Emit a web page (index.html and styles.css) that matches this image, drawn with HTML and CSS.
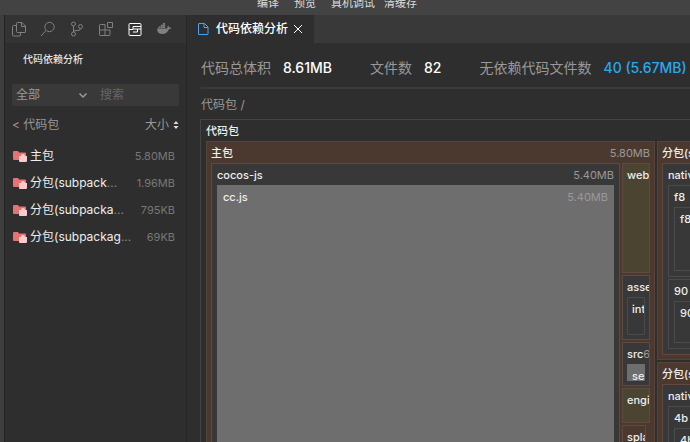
FILE: index.html
```html
<!DOCTYPE html>
<html lang="zh-CN">
<head>
  <meta charset="UTF-8" />
  <meta name="viewport" content="width=device-width, initial-scale=1" />
  <title>代码依赖分析</title>
  <link rel="stylesheet" href="styles.css">
</head>
<body>

  <header class="toolbar">
    <button class="tool">编译</button>
    <button class="tool">预览</button>
    <button class="tool">真机调试</button>
    <button class="tool">清缓存</button>
  </header>

  <div class="workspace">
    <aside class="sidebar">
      <nav class="activity">
        <button class="activity-btn" aria-label="文件">
          <svg viewBox="0 0 16 16"><path d="M6.500 1.500h4.500l3.500 3.500v6q0 .5-.5.500H6.500q-1 0-1-1v-8q0-1 1-1zM10.500 1.500v4h4M5.500 4.500h-3q-1 0-1 1v8.500q0 1 1 1h6q1 0 1-1v-2.500"/></svg>
        </button>
        <button class="activity-btn" aria-label="搜索">
          <svg viewBox="0 0 16 16"><circle cx="9.500" cy="6" r="4.700"/><path d="M6.300 9.300L1 15"/></svg>
        </button>
        <button class="activity-btn" aria-label="版本">
          <svg viewBox="0 0 16 16"><circle cx="4.500" cy="3" r="2"/><circle cx="4.500" cy="13" r="2"/><circle cx="11.500" cy="5.500" r="2"/><path d="M4.500 5v6M11.500 7.500q0 2-2.500 2H7q-2.500 0-2.500 1.500"/></svg>
        </button>
        <button class="activity-btn" aria-label="扩展">
          <svg viewBox="0 0 16 16"><path d="M7 3.500v11M1.500 9h10.500v4.700q0 .8-.8.800H2.300q-.8 0-.8-.8V4.300q0-.8.800-.8H7M9.500 1.500h5v5h-5z"/></svg>
        </button>
        <button class="activity-btn active" aria-label="代码依赖分析">
          <svg viewBox="0 0 16 16"><rect x="2" y="2.500" width="12" height="12" rx="1"/><path d="M14 5.500H6v2.500h4.500v3H6M2 8.500h4M10.500 8H14"/></svg>
        </button>
        <button class="activity-btn" aria-label="容器">
          <svg class="solid" viewBox="0 0 16 16"><path d="M1 7.500h10.500q-.5-2 .6-3 1 .8 1.100 2 1.500-.3 2.300.3-.8 1.500-2.700 1.500Q11.200 13 6.300 13 1.200 13 1 7.500zM2.500 5.500h2v1.600h-2zM4.800 5.500h2v1.600h-2zM7.100 5.500h2v1.600h-2zM4.800 3.700h4.300v1.500H4.800zM7.100 2h2v1.500h-2z"/></svg>
        </button>
      </nav>

      <h2 class="side-title">代码依赖分析</h2>

      <div class="filter">
        <select aria-label="类型">
          <option>全部</option>
        </select>
        <svg class="caret" viewBox="0 0 10 10"><path d="M1.500 3.500L5 7l3.500-3.500"/></svg>
        <input type="text" placeholder="搜索" aria-label="搜索">
      </div>

      <div class="list-head">
        <a href="#">&lt; 代码包</a>
        <button class="sort">大小
          <svg viewBox="0 0 6 10"><path d="M.5 4L3 1l2.500 3zM.5 6L3 9l2.500-3z"/></svg>
        </button>
      </div>

      <ul class="packages">
        <li>
          <svg class="folder" viewBox="0 0 14 12"><path class="back" d="M1 1h4l1 1.500h6q1 0 1 1V10H1q-1 0-1-1V2q0-1 1-1z"/><path class="bag" d="M6 6h2q0-2 2-2t2 2h2v5q0 1-1 1H7q-1 0-1-1z"/></svg>
          <span class="name">主包</span><span class="size">5.80MB</span>
        </li>
        <li>
          <svg class="folder" viewBox="0 0 14 12"><path class="back" d="M1 1h4l1 1.500h6q1 0 1 1V10H1q-1 0-1-1V2q0-1 1-1z"/><path class="bag" d="M6 6h2q0-2 2-2t2 2h2v5q0 1-1 1H7q-1 0-1-1z"/></svg>
          <span class="name">分包(subpack<i>...</i></span><span class="size">1.96MB</span>
        </li>
        <li>
          <svg class="folder" viewBox="0 0 14 12"><path class="back" d="M1 1h4l1 1.500h6q1 0 1 1V10H1q-1 0-1-1V2q0-1 1-1z"/><path class="bag" d="M6 6h2q0-2 2-2t2 2h2v5q0 1-1 1H7q-1 0-1-1z"/></svg>
          <span class="name">分包(subpacka<i>...</i></span><span class="size">795KB</span>
        </li>
        <li>
          <svg class="folder" viewBox="0 0 14 12"><path class="back" d="M1 1h4l1 1.500h6q1 0 1 1V10H1q-1 0-1-1V2q0-1 1-1z"/><path class="bag" d="M6 6h2q0-2 2-2t2 2h2v5q0 1-1 1H7q-1 0-1-1z"/></svg>
          <span class="name">分包(subpackag<i>...</i></span><span class="size">69KB</span>
        </li>
      </ul>
    </aside>

    <main class="main">
      <div class="tabs">
        <div class="tab">
          <svg class="file-icon" viewBox="0 0 12 14"><path d="M2 1.500h5.500l3.500 3.500v7q0 .5-.5.500H2q-.5 0-.5-.5V2q0-.5.500-.5zM7 1.500v4h4"/></svg>
          <span>代码依赖分析</span>
          <button class="close" aria-label="关闭">
            <svg viewBox="0 0 10 10"><path d="M1 1l8 8M9 1L1 9"/></svg>
          </button>
        </div>
      </div>

      <div class="content">
        <dl class="stats">
          <div><dt>代码总体积</dt><dd>8.61MB</dd></div>
          <div><dt>文件数</dt><dd>82</dd></div>
          <div><dt>无依赖代码文件数</dt><dd><a href="#">40 (5.67MB)</a></dd></div>
        </dl>

        <div class="crumb">代码包 /</div>

        <div class="node root">
          <div class="label">代码包</div>
          <div class="row">

            <div class="node package main-package">
              <div class="label">主包<span>5.80MB</span></div>
              <div class="row">
                <div class="node grow">
                  <div class="label">cocos-js<span>5.40MB</span></div>
                  <div class="node leaf grow">
                    <div class="label">cc.js<span>5.40MB</span></div>
                  </div>
                </div>
                <div class="column small-dirs">
                  <div class="node olive web"><div class="label">web-mobile</div></div>
                  <div class="node assets">
                    <div class="label">assets</div>
                    <div class="node grow"><div class="label">internal</div></div>
                  </div>
                  <div class="node src">
                    <div class="label">src<span>69KB</span></div>
                    <div class="node leaf grow"><div class="label">settings.js</div></div>
                  </div>
                  <div class="node olive engine"><div class="label">engine</div></div>
                  <div class="node package splash grow"><div class="label">splash</div></div>
                </div>
              </div>
            </div>

            <div class="column sub-packages">
              <div class="node package first">
                <div class="label">分包(subpackages)<span>1.96MB</span></div>
                <div class="node grow">
                  <div class="label">native</div>
                  <div class="column grow">
                    <div class="node f8">
                      <div class="label">f8</div>
                      <div class="node grow"><div class="label">f8</div></div>
                    </div>
                    <div class="node grow">
                      <div class="label">90</div>
                      <div class="node grow"><div class="label">90</div></div>
                    </div>
                  </div>
                </div>
              </div>
              <div class="node package grow">
                <div class="label">分包(subpackages)<span>795KB</span></div>
                <div class="node grow">
                  <div class="label">native</div>
                  <div class="node grow">
                    <div class="label">4b</div>
                    <div class="node grow"><div class="label">4b</div></div>
                  </div>
                </div>
              </div>
            </div>

          </div>
        </div>
      </div>
    </main>
  </div>

</body>
</html>
```
FILE: styles.css
```css
* {
  box-sizing: border-box;
}
body {
  margin: 0;
  height: 100vh;
  display: flex;
  flex-direction: column;
  overflow: hidden;
  background: #2e2e2e;
  color: #eee;
  font-family: Inter, "Noto Sans CJK SC", sans-serif;
  font-size: 12px;
  line-height: 16px;
}
button, input, select {
  font: inherit;
  color: inherit;
  background: none;
  border: none;
  padding: 0;
  margin: 0;
}
a {
  color: inherit;
  text-decoration: none;
}
svg {
  display: block;
  fill: none;
  stroke: currentColor;
}

/* top toolbar */
.toolbar {
  flex: none;
  height: 15px;
  background: #434343;
  display: flex;
  align-items: flex-end;
  gap: 15px;
  padding-left: 257px;
  padding-bottom: 4px;
}
.tool {
  font-size: 11px;
  color: #ddd;
  white-space: nowrap;
}
.tool:last-child {
  margin-left: -6px;
}
.workspace {
  flex: 1;
  min-height: 0;
  display: flex;
}

/* sidebar */
.sidebar {
  flex: none;
  width: 187px;
  border-left: 4px solid #3e3e3e;
  border-right: 1px solid #262626;
  box-shadow: inset 1px 0 #222;
  padding-left: 1px;
}
.activity {
  height: 28px;
  background: #333;
  display: flex;
  align-items: center;
  gap: 13px;
  padding-left: 6px;
}
.activity-btn {
  width: 16px;
  height: 16px;
  color: #808080;
}
.activity-btn.active {
  color: #fff;
}
.activity-btn svg {
  width: 16px;
  height: 16px;
}
.solid {
  fill: currentColor;
  stroke: none;
}
.side-title {
  margin: 8px 18px 17px;
  font-size: 10px;
  font-weight: 500;
  color: #e4e4e4;
}
.filter {
  height: 22px;
  margin: 0 7px;
  padding: 0 4px;
  background: #393939;
  border-radius: 2px;
  display: flex;
  align-items: center;
  color: #999;
}
.filter select {
  appearance: none;
  width: 62px;
}
.caret {
  width: 10px;
  height: 10px;
  stroke-width: 1.500;
}
.filter input {
  flex: 1;
  min-width: 0;
  margin-left: 12px;
}
.filter input::placeholder {
  color: #666;
}
.list-head {
  display: flex;
  justify-content: space-between;
  margin: 11px 7px 0;
  color: #999;
}
.sort {
  display: flex;
  align-items: center;
  gap: 4px;
}
.sort svg {
  width: 6px;
  height: 10px;
  fill: #ddd;
  stroke: none;
}
.packages {
  list-style: none;
  margin: 10px 11px 0 8px;
  padding: 0;
}
.packages li {
  display: flex;
  align-items: center;
  height: 26px;
  margin-bottom: 1px;
}
.folder {
  width: 14px;
  height: 12px;
  margin-right: 3px;
  stroke: none;
}
.folder .back {
  fill: #e57373;
}
.folder .bag {
  fill: #fbcaca;
}
.name {
  flex: 1;
  white-space: nowrap;
}
.name i {
  font-style: normal;
  color: #888;
}
.size {
  font-size: 11px;
  color: #777;
}

/* main */
.main {
  flex: 1;
  min-width: 0;
  display: flex;
  flex-direction: column;
}
.tabs {
  flex: none;
  height: 28px;
  background: #393939;
  display: flex;
}
.tab {
  display: flex;
  align-items: center;
  background: #2e2e2e;
  padding: 0 11px 0 10px;
  font-weight: 500;
  color: #fff;
}
.file-icon {
  width: 12px;
  height: 14px;
  margin-right: 7px;
  color: #42a5f5;
}
.close {
  margin-left: 5px;
}
.close svg {
  width: 10px;
  height: 10px;
}
.content {
  flex: 1;
  min-height: 0;
  overflow: hidden;
  padding-left: 13px;
}
.stats {
  display: flex;
  gap: 38px;
  height: 46px;
  margin: 0 0 0 1px;
  padding-top: 6px;
  border-bottom: 2px solid #3b3b3b;
  align-items: center;
  font-size: 14px;
  white-space: nowrap;
}
.stats div {
  display: flex;
  gap: 12px;
}
.stats dt {
  color: #999;
}
.stats dd {
  margin: 0;
  font-weight: 500;
  color: #fff;
}
.stats a {
  color: #29a9ee;
}
.crumb {
  margin: 8px 0 6px 1px;
  color: #999;
}

/* treemap */
.node {
  display: flex;
  flex-direction: column;
  min-width: 0;
  min-height: 0;
  overflow: hidden;
  border: 1px solid #4a4a4a;
  padding: 0 5px 5px;
  background: #383838;
}
.label {
  flex: none;
  display: flex;
  height: 21px;
  line-height: 22px;
  font-size: 11px;
  font-weight: 500;
  white-space: nowrap;
}
.label span {
  margin-left: auto;
  font-weight: 400;
  color: #999;
}
.row {
  flex: 1;
  min-height: 0;
  display: flex;
  gap: 2px;
}
.column {
  display: flex;
  flex-direction: column;
  gap: 2px;
  min-height: 0;
}
.grow {
  flex: 1;
}
.root {
  width: 180%;
  height: 480px;
  border-color: #444;
  background: #2e2e2e;
}
.package {
  padding: 0 4px 4px;
  background: #4b3930;
  border-color: #574339;
}
.package > .node, .package > .row .node {
  border-color: #5f4a40;
}
.package .node .node {
  border-color: #4a4a4a;
}
.node .node.leaf {
  background: #6e6e6e;
  border-color: #6e6e6e;
}
.olive {
  background: #4b4430;
}
.main-package {
  flex: none;
  width: 449px;
}
.small-dirs {
  flex: none;
  width: 28px;
}
.small-dirs .node {
  padding: 0 4px 4px;
}
.web {
  height: 110px;
}
.assets {
  height: 65px;
}
.src {
  height: 44px;
}
.engine {
  height: 35px;
}
.small-dirs .splash {
  margin-right: 4px;
}
.sub-packages {
  flex: 1;
}
.first {
  flex: none;
  height: 219px;
}
.f8 {
  flex: none;
  height: 92px;
}
```
